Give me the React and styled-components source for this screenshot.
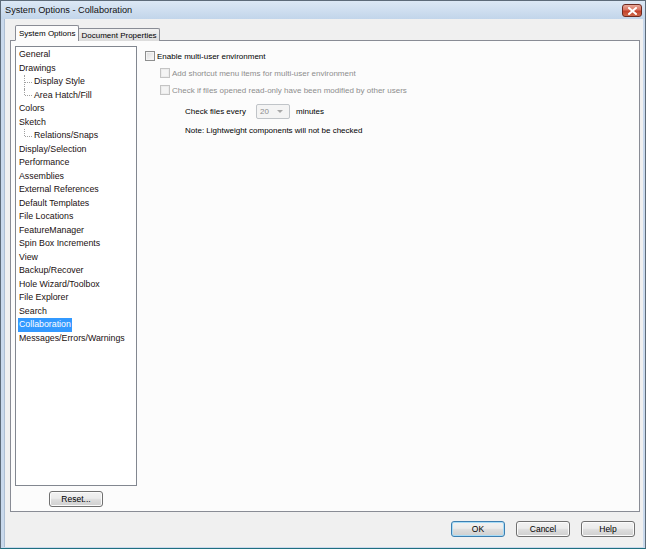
import styled, { createGlobalStyle } from "styled-components";

const GlobalStyle = createGlobalStyle`
  html, body {
    margin: 0;
    padding: 0;
    background: #ffffff;
  }
  body {
    font-family: "Liberation Sans", Arial, sans-serif;
  }
`;

const font = `"Liberation Sans", Arial, sans-serif`;

const treeItems = [
  { label: "General" },
  { label: "Drawings" },
  { label: "Display Style", child: true },
  { label: "Area Hatch/Fill", child: true, last: true },
  { label: "Colors" },
  { label: "Sketch" },
  { label: "Relations/Snaps", child: true, last: true },
  { label: "Display/Selection" },
  { label: "Performance" },
  { label: "Assemblies" },
  { label: "External References" },
  { label: "Default Templates" },
  { label: "File Locations" },
  { label: "FeatureManager" },
  { label: "Spin Box Increments" },
  { label: "View" },
  { label: "Backup/Recover" },
  { label: "Hole Wizard/Toolbox" },
  { label: "File Explorer" },
  { label: "Search" },
  { label: "Collaboration", selected: true },
  { label: "Messages/Errors/Warnings" },
];

const App = () => {
  return (
    <>
      <GlobalStyle />
      <Window>
        <TitleBar>
          <Title>System Options - Collaboration</Title>
          <CloseButton aria-label="close">
            <svg width="9" height="8" viewBox="0 0 9 8">
              <path d="M1 1 L8 7 M8 1 L1 7" stroke="#ffffff" strokeWidth="2" strokeLinecap="square" />
            </svg>
          </CloseButton>
        </TitleBar>
        <Body>
          <Tabs>
            <Tab $active>System Options</Tab>
            <Tab>Document Properties</Tab>
          </Tabs>
          <Panel>
            <LeftColumn>
              <Tree>
                {treeItems.map((item) => (
                  <TreeRow key={item.label} $child={item.child} $last={item.last}>
                    <TreeLabel $selected={item.selected}>{item.label}</TreeLabel>
                  </TreeRow>
                ))}
              </Tree>
              <Button $width={54}>Reset...</Button>
            </LeftColumn>
            <Content>
              <CheckRow $indent={0} $top={4}>
                <CheckBox />
                <span>Enable multi-user environment</span>
              </CheckRow>
              <CheckRow $indent={15} $top={5} $disabled>
                <CheckBox $disabled />
                <span>Add shortcut menu items for multi-user environment</span>
              </CheckRow>
              <CheckRow $indent={15} $top={5} $disabled>
                <CheckBox $disabled />
                <span>Check if files opened read-only have been modified by other users</span>
              </CheckRow>
              <IntervalRow>
                <IntervalLabel>Check files every</IntervalLabel>
                <Combo>
                  <span>20</span>
                  <svg width="6" height="4" viewBox="0 0 6 4">
                    <path d="M0 0 L6 0 L3 3 Z" fill="#a8a8a8" />
                  </svg>
                </Combo>
                <Units>minutes</Units>
              </IntervalRow>
              <Note>Note: Lightweight components will not be checked</Note>
            </Content>
          </Panel>
          <Footer>
            <Button $width={54} $default>OK</Button>
            <Button $width={54}>Cancel</Button>
            <Button $width={54}>Help</Button>
          </Footer>
        </Body>
      </Window>
    </>
  );
};

const Window = styled.div`
  width: 646px;
  height: 549px;
  box-sizing: border-box;
  border: 1px solid #5d6b79;
  border-bottom-color: #1f6f80;
  background: #c9d9ec;
  display: flex;
  flex-direction: column;
  overflow: hidden;
`;

const TitleBar = styled.div`
  height: 18px;
  flex: none;
  display: flex;
  align-items: center;
  justify-content: space-between;
  padding: 0 3px 0 4px;
  background: linear-gradient(#dce8f5, #c2d5ea);
`;

const Title = styled.span`
  font-family: ${font};
  font-size: 9.2px;
  color: #111;
`;

const CloseButton = styled.div`
  width: 20px;
  height: 13px;
  margin-top: 1px;
  box-sizing: border-box;
  border: 1px solid #6e2a20;
  border-radius: 3px;
  background: linear-gradient(#e9a99a 0%, #d8725f 45%, #c3402a 55%, #cf6a4c 100%);
  display: flex;
  align-items: center;
  justify-content: center;
`;

const Body = styled.div`
  flex: 1;
  margin: 0 2px 1px 3px;
  background: #f0f0f0;
  border-left: 1px solid #aebfd3;
  padding: 6px 3px 0 5px;
  display: flex;
  flex-direction: column;
`;

const Tabs = styled.div`
  display: flex;
  align-items: flex-end;
  padding-left: 5px;
  height: 16px;
  margin-bottom: -1px;
  position: relative;
  z-index: 1;
`;

const Tab = styled.div`
  font-family: ${font};
  font-size: 8px;
  color: #000;
  box-sizing: border-box;
  border: 1px solid #898c95;
  border-radius: 2px 2px 0 0;
  display: flex;
  align-items: center;
  ${({ $active }) =>
    $active
      ? `
    height: 16px;
    padding: 0 3px;
    background: #fcfcfc;
    border-bottom-color: #fcfcfc;
  `
      : `
    height: 13px;
    padding: 0 2px;
    margin-left: -1px;
    background: linear-gradient(#f2f2f2, #dcdcdc);
    border-bottom: none;
  `}
`;

const Panel = styled.div`
  height: 472px;
  box-sizing: border-box;
  border: 1px solid #898c95;
  background: #fcfcfc;
  display: flex;
  padding: 5px 4px 0 4px;
  gap: 8px;
`;

const LeftColumn = styled.div`
  width: 122px;
  display: flex;
  flex-direction: column;
  align-items: center;
  gap: 5px;
`;

const Tree = styled.div`
  width: 122px;
  height: 440px;
  box-sizing: border-box;
  border: 1px solid #828790;
  background: #ffffff;
  padding: 1px 0 0 3px;
`;

const TreeRow = styled.div`
  position: relative;
  height: 13.5px;
  display: flex;
  align-items: center;
  padding-left: ${({ $child }) => ($child ? "15px" : "0")};
  ${({ $child, $last }) =>
    $child
      ? `
    &::before {
      content: "";
      position: absolute;
      left: 5px;
      top: 0;
      height: ${$last ? "50%" : "100%"};
      border-left: 1px dotted #a0a0a0;
    }
    &::after {
      content: "";
      position: absolute;
      left: 6px;
      top: 50%;
      width: 7px;
      border-top: 1px dotted #a0a0a0;
    }
  `
      : ""}
`;

const TreeLabel = styled.span`
  font-family: ${font};
  font-size: 8.8px;
  line-height: 13.5px;
  padding: 0 1px;
  margin-left: -1px;
  white-space: nowrap;
  color: ${({ $selected }) => ($selected ? "#ffffff" : "#1a1010")};
  background: ${({ $selected }) => ($selected ? "#3399ff" : "transparent")};
`;

const Button = styled.div`
  width: ${({ $width }) => $width}px;
  height: 16px;
  box-sizing: border-box;
  border: 1px solid ${({ $default }) => ($default ? "#3c7fb1" : "#707070")};
  border-radius: 3px;
  background: linear-gradient(#f2f2f2 0%, #ebebeb 45%, #dddddd 55%, #cfcfcf 100%);
  box-shadow: inset 0 0 0 1px ${({ $default }) => ($default ? "#a8dcf7" : "#fbfbfb")};
  font-family: ${font};
  font-size: 8.5px;
  color: #000;
  display: flex;
  align-items: center;
  justify-content: center;
`;

const Content = styled.div`
  display: flex;
  flex-direction: column;
  font-family: ${font};
  font-size: 8px;
  color: #000;
  white-space: nowrap;
`;

const CheckRow = styled.div`
  display: flex;
  align-items: center;
  gap: 2px;
  height: 12px;
  margin-top: ${({ $top }) => $top}px;
  padding-left: ${({ $indent }) => $indent}px;
  color: ${({ $disabled }) => ($disabled ? "#8d8d8d" : "#000")};
`;

const CheckBox = styled.span`
  width: 10px;
  height: 10px;
  flex: none;
  box-sizing: border-box;
  border: 1px solid ${({ $disabled }) => ($disabled ? "#c4c4c4" : "#8e8f8f")};
  background: ${({ $disabled }) =>
    $disabled ? "#f4f4f4" : "linear-gradient(135deg, #dcdcdc, #fbfbfb)"};
  box-shadow: inset 0 0 0 1px ${({ $disabled }) => ($disabled ? "#ececec" : "#f4f4f4")};
`;

const IntervalRow = styled.div`
  display: flex;
  align-items: center;
  margin-top: 8px;
  padding-left: 40px;
  height: 15px;
`;

const IntervalLabel = styled.span`
  width: 71px;
`;

const Units = styled.span`
  margin-left: 6px;
`;

const Combo = styled.div`
  width: 34px;
  height: 15px;
  box-sizing: border-box;
  border: 1px solid #c0c4c8;
  border-radius: 2px;
  background: #f4f4f4;
  color: #8d8d8d;
  display: flex;
  align-items: center;
  justify-content: space-between;
  padding: 0 6px 0 3px;
`;

const Note = styled.div`
  margin-top: 7px;
  padding-left: 40px;
`;

const Footer = styled.div`
  display: flex;
  justify-content: flex-end;
  gap: 11px;
  padding: 9px 5px 0 0;
`;

export default App;
